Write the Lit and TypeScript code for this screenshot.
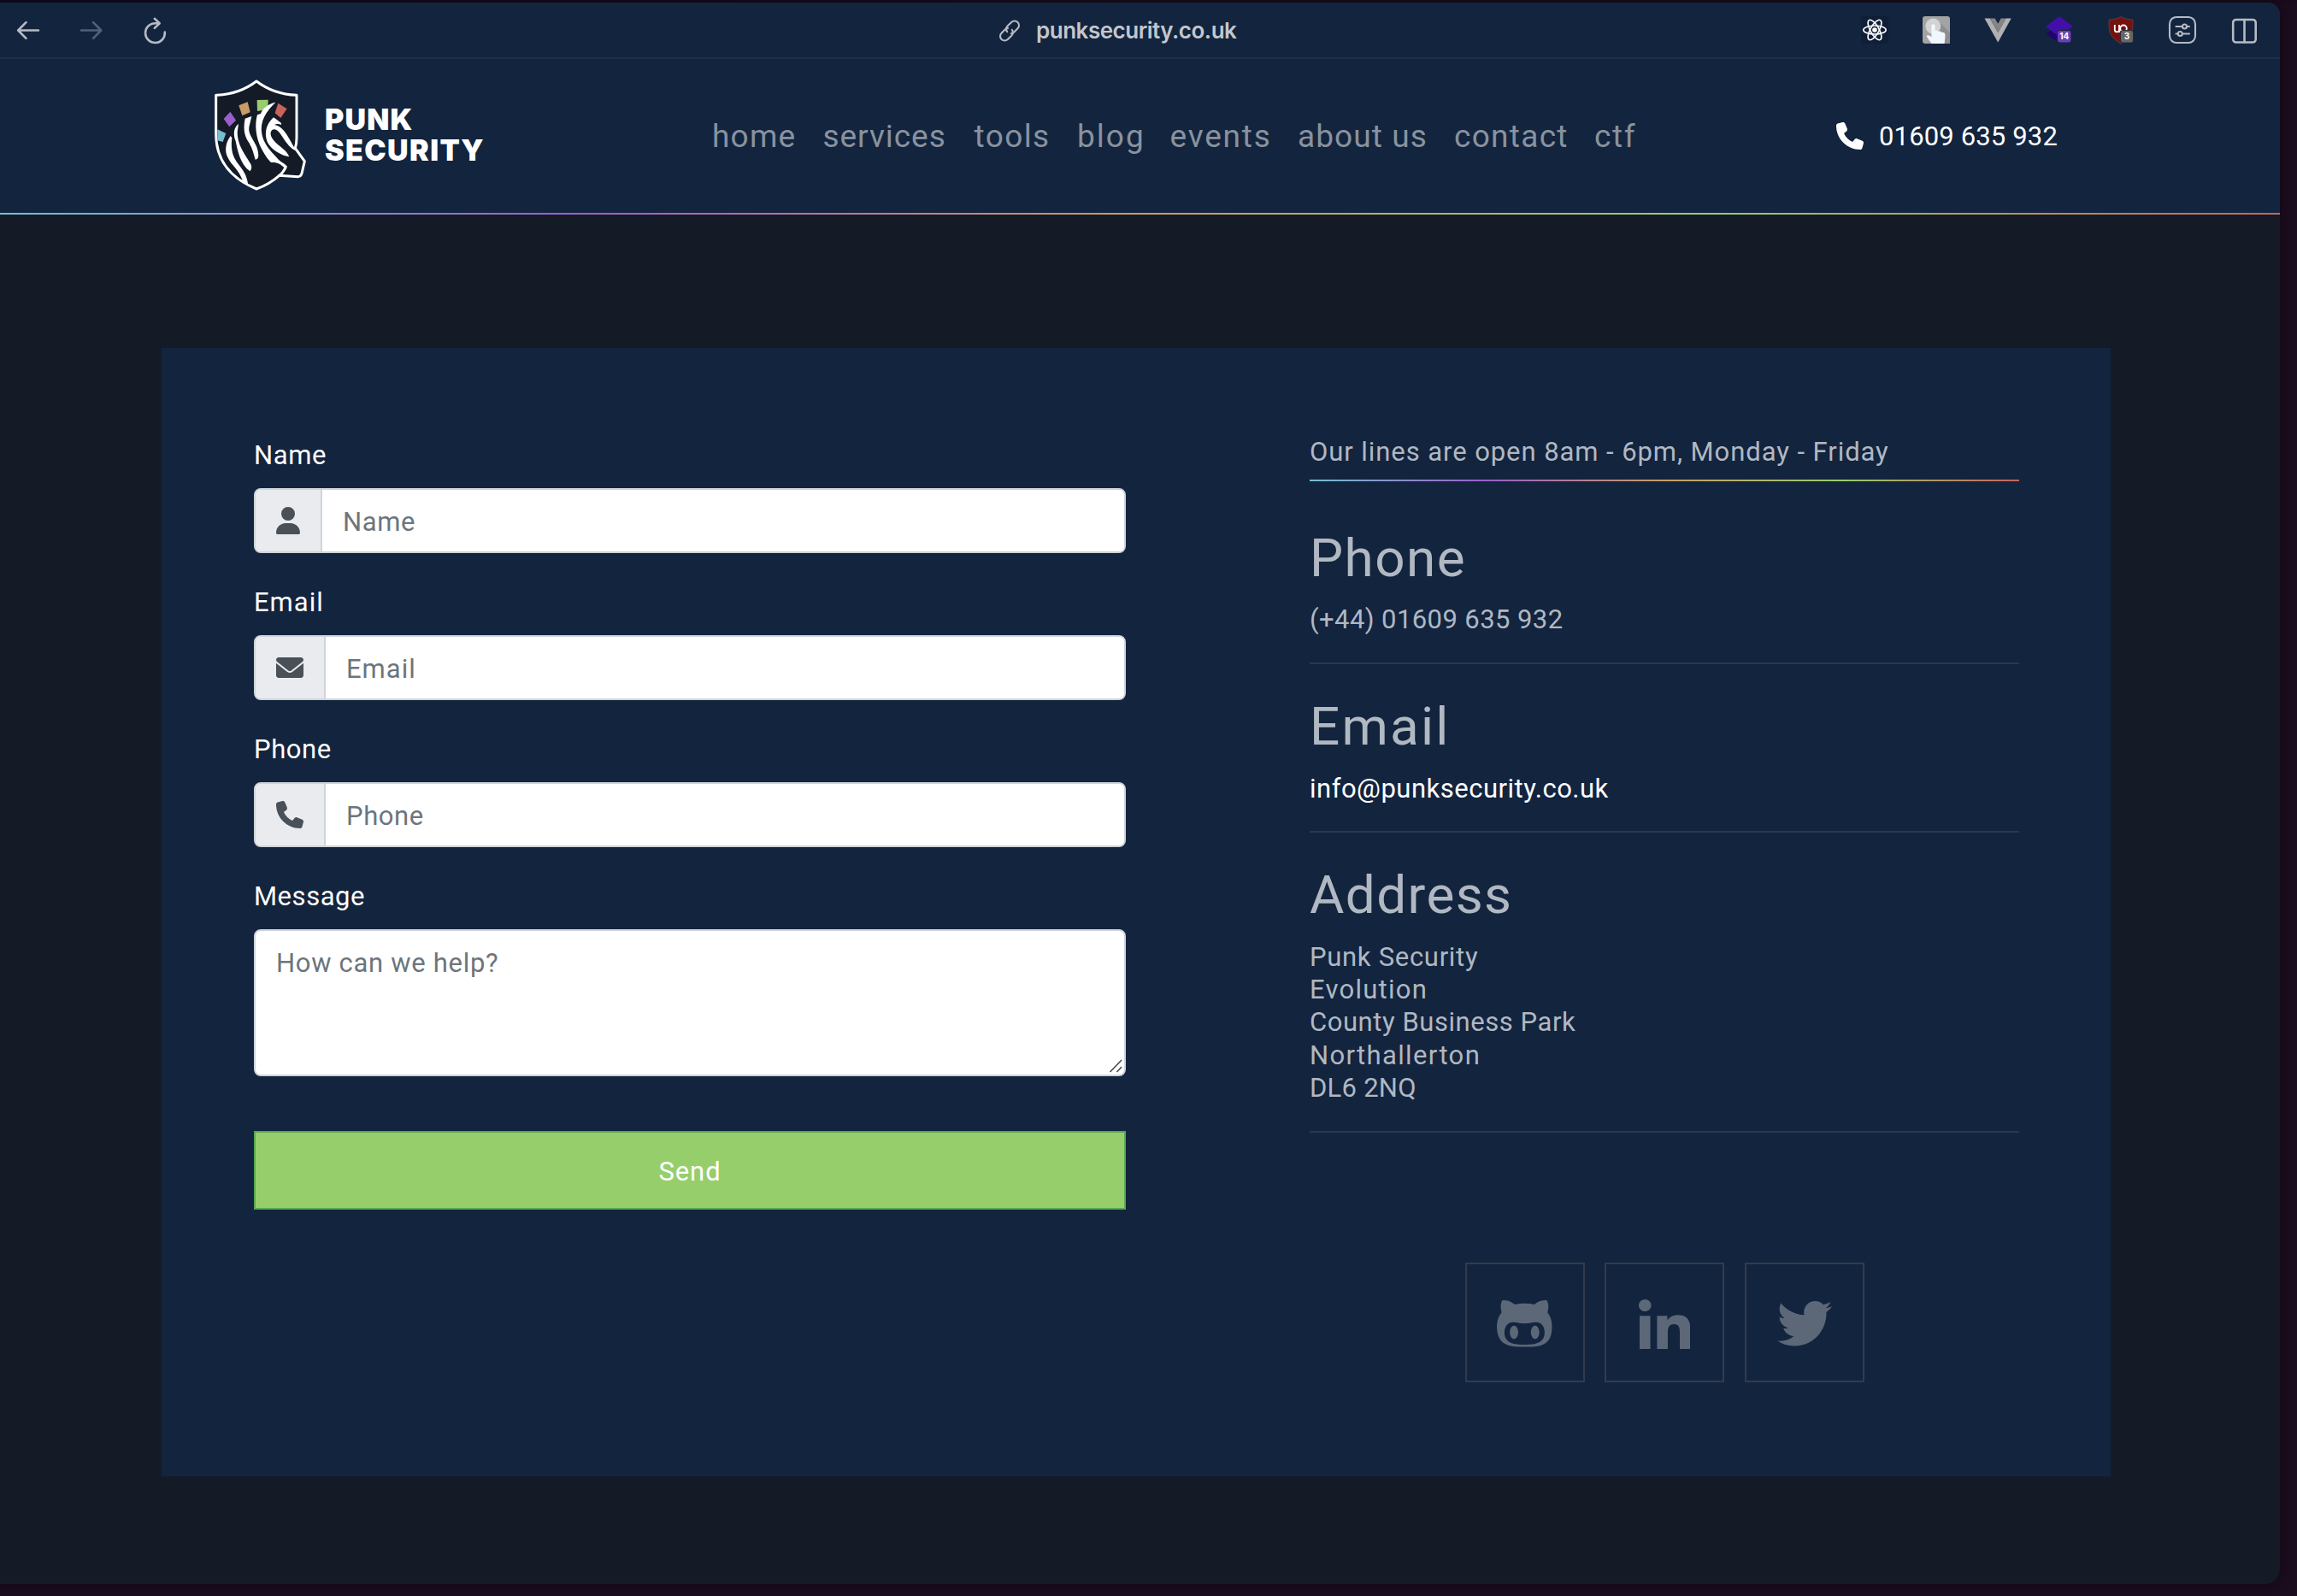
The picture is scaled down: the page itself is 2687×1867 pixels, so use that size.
import { LitElement, html, svg, css } from "lit";
import { styleMap } from "lit/directives/style-map.js";

const PHONE =
  "M164.9 24.6c-7.7-18.6-28-28.5-47.4-23.2l-88 24C12.1 30.2 0 46 0 64C0 311.4 200.6 512 448 512c18 0 33.8-12.1 38.6-29.5l24-88c5.3-19.4-4.6-39.7-23.2-47.4l-96-40c-16.3-6.8-35.2-2.1-46.3 11.6L304.7 368C234.3 334.7 177.3 277.7 144 207.3L193.3 167c13.7-11.2 18.4-30 11.6-46.3l-40-96z";
const USER =
  "M224 256A128 128 0 1 0 224 0a128 128 0 1 0 0 256zm-45.7 48C79.8 304 0 383.8 0 482.3C0 498.7 13.3 512 29.7 512H418.3c16.4 0 29.7-13.3 29.7-29.7C448 383.8 368.2 304 269.7 304H178.3z";
const ENVELOPE =
  "M256 352c-16.53 0-33.06-5.422-47.16-16.41L0 173.2V400C0 426.5 21.49 448 48 448h416c26.51 0 48-21.49 48-48V173.2l-208.8 162.5C289.1 346.6 272.5 352 256 352zM16.29 145.3l212.2 165.1c16.19 12.6 38.87 12.6 55.06 0l212.2-165.1C505.1 137.3 512 125 512 112C512 85.49 490.5 64 464 64h-416C21.49 64 0 85.49 0 112C0 125 6.01 137.3 16.29 145.3z";
const GITHUB =
  "M186.1 328.7c0 20.9-10.9 55.1-36.7 55.1s-36.7-34.2-36.7-55.1 10.9-55.1 36.7-55.1 36.7 34.2 36.7 55.1zM480 278.2c0 31.9-3.2 65.7-17.5 95-37.9 76.6-142.1 74.8-216.7 74.8-75.8 0-186.2 2.7-225.6-74.8-14.6-29-20.2-63.1-20.2-95 0-41.9 13.9-81.5 41.5-113.6-5.2-15.8-7.7-32.4-7.7-48.8 0-21.5 4.9-32.3 14.6-51.8 45.3 0 74.3 9 108.8 36 29-6.9 58.8-10 88.7-10 27 0 54.2 2.9 80.4 9.2 34-26.7 63-35.2 107.8-35.2 9.8 19.5 14.6 30.3 14.6 51.8 0 16.4-2.6 32.7-7.7 48.2 27.5 32.4 39 72.3 39 114.2zm-64.3 50.5c0-43.9-26.7-82.6-73.5-82.6-18.9 0-37 3.4-56 6-14.9 2.3-29.8 3.2-45.1 3.2-15.2 0-30.1-.9-45.1-3.2-18.7-2.6-37-6-56-6-46.8 0-73.5 38.7-73.5 82.6 0 87.8 80.4 101.3 150.4 101.3h48.2c70.3 0 150.6-13.4 150.6-101.3zm-82.6-55.1c-25.8 0-36.7 34.2-36.7 55.1s10.9 55.1 36.7 55.1 36.7-34.2 36.7-55.1-10.9-55.1-36.7-55.1z";
const LINKEDIN =
  "M100.28 448H7.4V148.9h92.88zM53.79 108.1C24.09 108.1 0 83.5 0 53.8a53.79 53.79 0 0 1 107.58 0c0 29.7-24.1 54.3-53.79 54.3zM447.9 448h-92.68V302.4c0-34.7-.7-79.2-48.29-79.2-48.29 0-55.69 37.7-55.69 76.7V448h-92.78V148.9h89.08v40.8h1.3c12.4-23.5 42.69-48.3 87.88-48.3 94 0 111.28 61.9 111.28 142.3V448z";
const TWITTER =
  "M459.37 151.716c.325 4.548.325 9.097.325 13.645 0 138.72-105.583 298.558-298.558 298.558-59.452 0-114.68-17.219-161.137-47.106 8.447.974 16.568 1.299 25.34 1.299 49.055 0 94.213-16.568 130.274-44.832-46.132-.975-84.792-31.188-98.112-72.772 6.498.974 12.995 1.624 19.818 1.624 9.421 0 18.843-1.3 27.614-3.573-48.081-9.747-84.143-51.98-84.143-102.985v-1.299c13.969 7.797 30.214 12.67 47.431 13.319-28.264-18.843-46.781-51.005-46.781-87.391 0-19.492 5.197-37.36 14.294-52.954 51.655 63.675 129.3 105.258 216.365 109.807-1.624-7.797-2.599-15.918-2.599-24.04 0-57.828 46.782-104.934 104.934-104.934 30.213 0 57.502 12.67 76.67 33.137 23.715-4.548 46.456-13.32 66.599-25.34-7.798 24.366-24.366 44.833-46.132 57.827 21.117-2.273 41.584-8.122 60.426-16.243-14.292 20.791-32.161 39.308-52.628 54.253z";

const track = (px: number) => styleMap({ letterSpacing: `${px}px` });

/* ---------- browser toolbar ---------- */
class BrowserBar extends LitElement {
  static styles = css`
    :host { display: flex; align-items: center; height: 64px; border-bottom: 2px solid #1f2f4a; background: #13243e; font-family: Inter, "Liberation Sans", sans-serif; }
    svg { display: block; flex: none; overflow: visible; }
    .nav { display: flex; gap: 42px; padding-left: 17px; }
    .address { display: flex; align-items: center; gap: 17px; margin-left: 970px; padding-top: 2px; color: #c3c7cd; }
    .url { font-size: 26px; line-height: 32px; font-weight: 600; letter-spacing: -0.49px; white-space: nowrap; }
    .tools { display: flex; gap: 40px; margin-left: auto; padding-right: 26px; }
    .line { fill: none; stroke: #b5bac4; stroke-width: 2.6; stroke-linecap: round; stroke-linejoin: round; }
    .thin { stroke-width: 2.1; }
    .dim { stroke: #536077; }
    .badge { font: 700 10px Inter, sans-serif; fill: #fff; text-anchor: middle; }
  `;
  render() {
    return html`
      <div class="nav">
        <svg width="32" height="32" viewBox="0 0 32 32"><path class="line" d="M28 16.5H5M13.5 7.2L4.2 16.5l9.3 9.3" /></svg>
        <svg width="32" height="32" viewBox="0 0 32 32"><path class="line dim" d="M4 16.5h23M18 7.2l9.3 9.3-9.3 9.3" /></svg>
        <svg width="32" height="32" viewBox="0 0 32 32"><path class="line" d="M27.8 18.6A11.4 11.4 0 1 1 16.4 8.2h5M15.8 2.800l5.900 5.400-5.900 5.700" /></svg>
      </div>
      <div class="address">
        <svg width="28" height="28" viewBox="0 0 28 28"><g class="line thin" transform="rotate(-45 14 14)"><path d="M16.8 15.2a5.2 5.2 0 0 1-5.2 4.4H5.4a5.2 5.2 0 0 1-5.2-5.2 5.2 5.2 0 0 1 5.2-5.2h6.2a4.6 4.6 0 0 1 3.2 1.2" /><path d="M11.2 12.8a5.2 5.2 0 0 1 5.2-4.4h6.2a5.2 5.2 0 0 1 5.2 5.2 5.2 5.2 0 0 1-5.2 5.2h-6.2a4.6 4.6 0 0 1-3.2-1.2" /></g></svg>
        <span class="url">punksecurity.co.uk</span>
      </div>
      <div class="tools">
        <svg width="32" height="32" viewBox="0 0 32 32">
          <rect width="32" height="32" fill="#101e38" />
          <g fill="none" stroke="#fff" stroke-width="1.6"><ellipse cx="16" cy="16" rx="13.2" ry="5" /><ellipse cx="16" cy="16" rx="13.2" ry="5" transform="rotate(60 16 16)" /><ellipse cx="16" cy="16" rx="13.2" ry="5" transform="rotate(120 16 16)" /></g>
          <circle cx="16" cy="16" r="2.8" fill="#fff" />
        </svg>
        <svg width="32" height="32" viewBox="0 0 32 32">
          <rect width="32" height="32" rx="3" fill="#a3a3a3" />
          <path d="M18 5L32 19v13H14z" fill="#8e8e8e" />
          <circle cx="12.3" cy="11.6" r="9" fill="#d3d3d3" />
          <path d="M10.4 11.3a2.1 2.1 0 0 1 4.2 0V17c1-.7 3.5-.4 3.8.9 1.4-.8 3.3-.2 3.6 1 2-.7 4 .1 4.3 2.2.4 3-.2 5.4-.6 10.9H10.5C8.5 28.5 5 25 4.7 23c.6-1.3 3.7-.8 5.7 1.6z" fill="#f1f7ff" />
        </svg>
        <svg width="32" height="32" viewBox="0 0 32 32"><path d="M0.5 2.5L16.2 30.5 31.7 2.5H25.5L16.2 19 6.8 2.5z" fill="#b1b1b1" /><path d="M6.8 2.5L16.2 19 25.5 2.5H19.7L16.2 8.8 12.6 2.5z" fill="#858585" /></svg>
        <svg width="32" height="32" viewBox="0 0 32 32">
          <path d="M0 20l16-8 16 8-16 12z" fill="#23046b" /><path d="M0 12L16 0l16 12-16 12z" fill="#430ea9" />
          <rect x="13.5" y="16.5" width="16.5" height="14.5" rx="3" fill="#6a41b5" stroke="#13243e" stroke-width="1" /><text class="badge" x="21.7" y="27.4">14</text>
        </svg>
        <svg width="32" height="32" viewBox="0 0 32 32">
          <path d="M16 .5c4 2.2 9 3.500 14 3.500 0 14 0 20-14 28C2 24 2 18 2 4c5 0 10-1.300 14-3.500z" fill="#75120d" stroke="#5c4450" stroke-width=".8" />
          <path d="M8.800 10v5.800a2.600 2.600 0 0 0 5.200 0V10M14 19v-4.500" fill="none" stroke="#fff" stroke-width="1.800" /><circle cx="19" cy="14.300" r="3.800" fill="none" stroke="#fff" stroke-width="1.800" />
          <rect x="15.500" y="16.500" width="15" height="14.500" rx="3" fill="#666" stroke="#13243e" stroke-width=".8" /><text class="badge" x="23" y="27.400">3</text>
        </svg>
        <svg width="32" height="32" viewBox="0 0 32 32"><g class="line thin"><rect x="1" y="1" width="30" height="30" rx="8" /><path d="M8.500 12h7M21.500 12h2.500M8.500 20.500h2M16.500 20.500h7.500" /><circle cx="18.500" cy="12" r="2.500" /><circle cx="13.300" cy="20.500" r="2.500" /></g></svg>
        <svg width="32" height="32" viewBox="0 0 32 32"><g class="line"><rect x="3.200" y="4" width="26.500" height="26.500" rx="3.500" /><path d="M16.500 4v26.500" /></g></svg>
      </div>`;
  }
}
customElements.define("browser-bar", BrowserBar);

/* ---------- site header ---------- */
const NAV: [string, number, number][] = [
  ["home", 1.2, 129.5], ["services", 0.95, 177], ["tools", 1.4, 120.5], ["blog", 2, 108.5],
  ["events", 1.8, 149.5], ["about us", 1.1, 183], ["contact", 1.3, 164], ["ctf", 1.6, 50],
];

class SiteHeader extends LitElement {
  static styles = css`
    :host { display: flex; align-items: center; box-sizing: border-box; height: 182px; background: linear-gradient(90deg, #75bfd0, #9a5fcb 25%, #c99c66 50%, #98cd6d 75%, #c8635c) bottom / 100% 2px no-repeat #13243e; font-family: Roboto, "Noto Sans", sans-serif; padding: 0 0 2px 245px; }
    .logo { display: flex; align-items: center; width: 588px; gap: 15px; }
    .logo svg { display: block; margin-top: -2px; }
    .brand { font: 900 34px/36px Inter, "Liberation Sans", sans-serif; color: #fff; white-space: nowrap; padding-bottom: 2px; }
    nav { display: flex; padding-top: 2px; }
    nav a { box-sizing: border-box; font-size: 37px; line-height: 48px; color: #89929f; white-space: nowrap; }
    .call { display: flex; align-items: center; gap: 18px; margin-left: 233px; font-size: 31px; line-height: 36px; color: #fff; white-space: nowrap; }
    .call span { padding-top: 2px; }
  `;
  render() {
    return html`
      <div class="logo">
        <svg width="120" height="140" viewBox="0 0 360 420">
          <path d="M165 21Q105 67 23 70V206C23 300 75 362 165 399Q210 383 245 352L310 356Q320 356 324 345L334 302L301 256Q306 240 306 220V70Q225 67 165 21Z" fill="#141b27" stroke="#fff" stroke-width="9" stroke-linejoin="round" />
          <path d="M28 190L58 204 47 234 28 229Z" fill="#75bfd0" />
          <path d="M50 153L73 128 93 158 70 181Z" fill="#9a5fcb" />
          <path d="M103 106L134 94 143 130 115 142Z" fill="#c79c66" />
          <path d="M167 87L206 86 205 120 168 126Z" fill="#98cd6d" />
          <path d="M241 98L272 118 250 150 230 133Z" fill="#c8635c" />
          <g fill="#fff">
            <path d="M74 213C54 240 54 270 64 288C78 318 104 330 117 372L136 386C131 350 118 333 102 313C82 288 74 262 79 220Z" />
            <path d="M102 171C84 184 83 208 92 232C99 264 108 314 142 337C151 326 149 316 139 302C118 268 98 240 98 200Z" />
            <path d="M148 144L125 152C116 196 127 220 139 237C151 257 155 276 161 296C175 294 173 281 169 262C165 236 134 210 139 182Z" />
            <path d="M232 95C206 100 185 118 180 135L168 139C158 172 162 222 184 260C196 282 206 296 216 306C238 304 250 312 262 324C256 334 250 344 238 352L252 352C262 342 270 332 273 320C256 304 246 303 236 289C212 262 190 240 184 206C176 160 200 126 232 95Z" />
            <path d="M225 148C234 154 240 160 252 168L252 174C244 170 234 170 228 174C262 178 280 226 298 254L304 264C288 262 270 238 256 216C244 196 232 184 220 192C208 204 218 222 234 238C254 256 272 266 280 286C250 282 214 258 203 234C190 200 202 168 225 148Z" />
          </g>
        </svg>
        <div class="brand"><div style=${track(1.2)}>PUNK</div><div style=${track(1.4)}>SECURITY</div></div>
      </div>
      <nav>${NAV.map(([t, ls, w]) => html`<a style=${styleMap({ letterSpacing: `${ls}px`, width: `${w}px` })}>${t}</a>`)}</nav>
      <div class="call"><svg width="32" height="32" viewBox="0 0 512 512"><path fill="#fff" d=${PHONE} /></svg><span style=${track(0.15)}>01609 635 932</span></div>`;
  }
}
customElements.define("site-header", SiteHeader);

/* ---------- contact form ---------- */
const FIELDS: { label: string; ls: number; path: string; w: number }[] = [
  { label: "Name", ls: 0.6, path: USER, w: 28 },
  { label: "Email", ls: 1, path: ENVELOPE, w: 32 },
  { label: "Phone", ls: 0.6, path: PHONE, w: 32 },
];

class ContactForm extends LitElement {
  static styles = css`
    :host { display: block; width: 1020px; font: 31px/48px Roboto, "Noto Sans", sans-serif; color: #fff; }
    label { display: block; height: 48px; line-height: 52.5px; margin-bottom: 16px; }
    .group { display: flex; height: 76px; box-sizing: border-box; border: 2px solid #ced4da; border-radius: 8px; background: #fff; overflow: hidden; margin-bottom: 32px; }
    .addon { display: flex; align-items: center; padding: 0 24px; background: #e9ebef; border-right: 2px solid #ced4da; }
    .addon svg { display: block; }
    input, textarea { font: inherit; color: #212529; border: 0; margin: 0; background: #fff; outline: 0; }
    input { flex: 1; min-width: 0; padding: 4px 24px 0; letter-spacing: inherit; }
    ::placeholder { color: #6c757d; opacity: 1; }
    textarea { display: block; box-sizing: border-box; width: 1020px; height: 172px; border: 2px solid #ced4da; border-radius: 8px; padding: 14px 24px 10px; resize: none; }
    .area { position: relative; margin-bottom: 64px; }
    .grip { position: absolute; right: 4px; bottom: 4px; }
    button { display: block; width: 1020px; height: 92px; padding: 4px 0 0; border: 2px solid #58a750; background: #97ce6c; color: #fff; font: inherit; letter-spacing: 0.9px; }
  `;
  render() {
    return html`
      ${FIELDS.map(
        (f) => html`<label style=${track(f.ls)}>${f.label}</label>
          <div class="group" style=${track(f.ls)}>
            <div class="addon"><svg width=${f.w} height="32" viewBox="0 0 ${f.w * 16} 512"><path fill="#495057" d=${f.path} /></svg></div>
            <input placeholder=${f.label} />
          </div>`
      )}
      <label style=${track(0.55)}>Message</label>
      <div class="area">
        <textarea placeholder="How can we help?" style=${track(0.7)}></textarea>
        <svg class="grip" width="16" height="16" viewBox="0 0 16 16"><path d="M1.5 15L15 1M9.5 15L15 9" stroke="#444" stroke-width="1.5" fill="none" /></svg>
      </div>
      <button>Send</button>`;
  }
}
customElements.define("contact-form", ContactForm);

/* ---------- contact details ---------- */
const SOCIAL = [
  { path: GITHUB, box: "0 64 480 384", w: 64.5, h: 54.5 },
  { path: LINKEDIN, box: "0 0 448 448", w: 60.5, h: 58 },
  { path: TWITTER, box: "0 48 512 416", w: 64, h: 52.5 },
];

class ContactDetails extends LitElement {
  static styles = css`
    :host { display: block; width: 830px; font: 31px/38.4px Roboto, "Noto Sans", sans-serif; color: #b0b8c2; }
    .hours { height: 56px; box-sizing: border-box; line-height: 44px; white-space: nowrap; background: linear-gradient(90deg, #75bfd0, #9a5fcb 25%, #c99c66 50%, #98cd6d 75%, #c8635c) bottom / 100% 2px no-repeat; }
    section { box-sizing: border-box; border-bottom: 2px solid #2b3653; padding-top: 35px; height: 197px; }
    .first { height: 214px; padding-top: 51.5px; }
    .last { height: 351px; }
    h2 { margin: 0 0 15.5px; font-size: 62px; line-height: 76px; font-weight: 400; }
    p { margin: 0; }
    .link { color: #fff; }
    .social { display: flex; justify-content: center; gap: 23.5px; margin-top: 152px; }
    .box { box-sizing: border-box; width: 140px; height: 140px; border: 2px solid #333b4b; display: flex; align-items: center; justify-content: center; padding-top: 3px; }
    .box svg { display: block; }
  `;
  render() {
    return html`
      <div class="hours" style=${track(0.93)}>Our lines are open 8am - 6pm, Monday - Friday</div>
      <section class="first"><h2 style=${track(1.5)}>Phone</h2><p style=${track(0.42)}>(+44) 01609 635 932</p></section>
      <section><h2 style=${track(2.2)}>Email</h2><p class="link" style=${track(0.5)}>info@punksecurity.co.uk</p></section>
      <section class="last">
        <h2 style=${track(1.4)}>Address</h2>
        <p style=${track(0.7)}>Punk Security</p>
        <p style=${track(1.25)}>Evolution</p>
        <p style=${track(0.55)}>County Business Park</p>
        <p style=${track(1.35)}>Northallerton</p>
        <p style=${track(0.25)}>DL6 2NQ</p>
      </section>
      <div class="social">
        ${SOCIAL.map((s) => html`<div class="box"><svg width=${s.w} height=${s.h} viewBox=${s.box} preserveAspectRatio="none">${svg`<path fill="#5c6778" d=${s.path} />`}</svg></div>`)}
      </div>`;
  }
}
customElements.define("contact-details", ContactDetails);

class AppRoot extends LitElement {
  static styles = css`
    :host { display: block; box-sizing: border-box; height: 1867px; padding-top: 3px; overflow: hidden; background: linear-gradient(90deg, #100b1b, #190b1c 50%) top / 100% 3px no-repeat #1b0c1e; }
    .window { width: 2667px; height: 1850px; border-radius: 0 14px 18px 0; overflow: hidden; background: #141b27; box-shadow: 0 0 14px rgba(8, 4, 12, 0.5); }
    .panel { display: flex; justify-content: space-between; box-sizing: border-box; width: 2280px; height: 1320px; margin: 156px 0 0 189px; padding: 100px 107px 0 108px; background: #13243e; }
  `;
  render() {
    return html`<div class="window">
      <browser-bar></browser-bar>
      <site-header></site-header>
      <div class="panel"><contact-form></contact-form><contact-details></contact-details></div>
    </div>`;
  }
}
customElements.define("app-root", AppRoot);
